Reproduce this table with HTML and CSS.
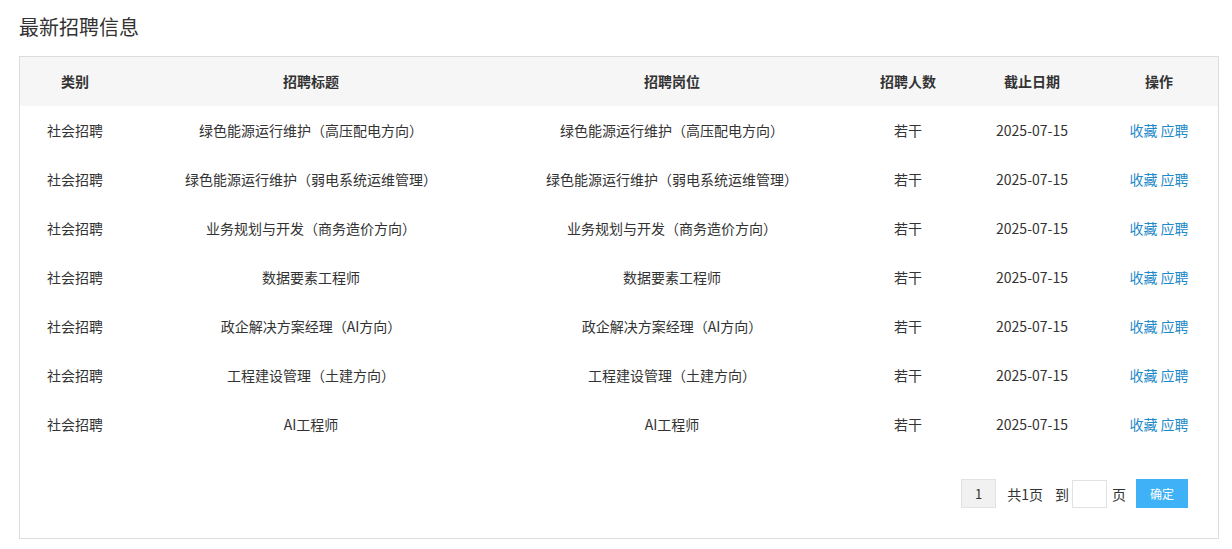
FILE: index.html
```html
<!DOCTYPE html>
<html lang="zh">
<head>
<meta charset="utf-8">
<link rel="stylesheet" href="styles.css">
</head>
<body>
<div class="page">
  <h2 class="title">最新招聘信息</h2>
  <div class="box">
    <table class="jobs">
      <colgroup>
        <col class="c1"><col class="c2"><col class="c3"><col class="c4"><col class="c5"><col class="c6">
      </colgroup>
      <thead>
        <tr><th>类别</th><th>招聘标题</th><th>招聘岗位</th><th>招聘人数</th><th>截止日期</th><th>操作</th></tr>
      </thead>
      <tbody>
        <tr><td>社会招聘</td><td>绿色能源运行维护（高压配电方向）</td><td>绿色能源运行维护（高压配电方向）</td><td>若干</td><td>2025-07-15</td><td><a class="lnk">收藏</a> <a class="lnk">应聘</a></td></tr>
        <tr><td>社会招聘</td><td>绿色能源运行维护（弱电系统运维管理）</td><td>绿色能源运行维护（弱电系统运维管理）</td><td>若干</td><td>2025-07-15</td><td><a class="lnk">收藏</a> <a class="lnk">应聘</a></td></tr>
        <tr><td>社会招聘</td><td>业务规划与开发（商务造价方向）</td><td>业务规划与开发（商务造价方向）</td><td>若干</td><td>2025-07-15</td><td><a class="lnk">收藏</a> <a class="lnk">应聘</a></td></tr>
        <tr><td>社会招聘</td><td>数据要素工程师</td><td>数据要素工程师</td><td>若干</td><td>2025-07-15</td><td><a class="lnk">收藏</a> <a class="lnk">应聘</a></td></tr>
        <tr><td>社会招聘</td><td>政企解决方案经理（AI方向）</td><td>政企解决方案经理（AI方向）</td><td>若干</td><td>2025-07-15</td><td><a class="lnk">收藏</a> <a class="lnk">应聘</a></td></tr>
        <tr><td>社会招聘</td><td>工程建设管理（土建方向）</td><td>工程建设管理（土建方向）</td><td>若干</td><td>2025-07-15</td><td><a class="lnk">收藏</a> <a class="lnk">应聘</a></td></tr>
        <tr><td>社会招聘</td><td>AI工程师</td><td>AI工程师</td><td>若干</td><td>2025-07-15</td><td><a class="lnk">收藏</a> <a class="lnk">应聘</a></td></tr>
      </tbody>
    </table>
    <div class="pager">
      <span class="pnum">1</span>
      <span class="ptext total">共1页</span>
      <span class="ptext goto">到</span>
      <span class="pinput"></span>
      <span class="ptext unit">页</span>
      <span class="pbtn">确定</span>
    </div>
  </div>
</div>
</body>
</html>
```

FILE: styles.css
```css
* { box-sizing: border-box; }
html, body { margin: 0; padding: 0; background: #fff; }
body {
  font-family: "Noto Sans CJK SC", "Liberation Sans", sans-serif;
  color: #333;
}
.page { padding: 12px 13px 0 19px; }
.title {
  margin: 0 0 14px 0;
  font-size: 20px;
  font-weight: normal;
  line-height: 30px;
  color: #333;
}
.box {
  width: 1200px;
  border: 1px solid #dcdcdc;
  padding-bottom: 30px;
}
.jobs {
  width: 100%;
  border-collapse: collapse;
  table-layout: fixed;
  font-size: 14px;
}
.c1 { width: 110px; }
.c2 { width: 362px; }
.c3 { width: 360px; }
.c4 { width: 112px; }
.c5 { width: 136px; }
.c6 { width: 118px; }
.jobs th {
  background: #f6f6f6;
  height: 49px;
  font-weight: bold;
  text-align: center;
  padding: 0 0 1px 0;
  color: #333;
}
.jobs td {
  height: 49px;
  text-align: center;
  padding: 0 0 2px 0;
  color: #333;
}
.lnk { color: #1f8ac9; text-decoration: none; }
.pager {
  display: flex;
  justify-content: flex-end;
  align-items: center;
  margin-top: 30px;
  padding-right: 30px;
  font-size: 14px;
}
.pnum {
  width: 35px;
  height: 29px;
  background: #f1f1f1;
  border: 1px solid #e2e2e2;
  display: flex;
  align-items: center;
  justify-content: center;
  color: #333;
  font-size: 13px;
}
.ptext { color: #333; }
.total { margin-left: 11px; }
.goto { margin-left: 12px; }
.pinput {
  width: 35px;
  height: 28px;
  border: 1px solid #e2e2e2;
  margin-left: 3px;
}
.unit { margin-left: 5px; }
.pbtn {
  width: 52px;
  height: 29px;
  background: #3fb1f6;
  color: #fff;
  margin-left: 10px;
  display: flex;
  align-items: center;
  justify-content: center;
  font-size: 12px;
}
```
